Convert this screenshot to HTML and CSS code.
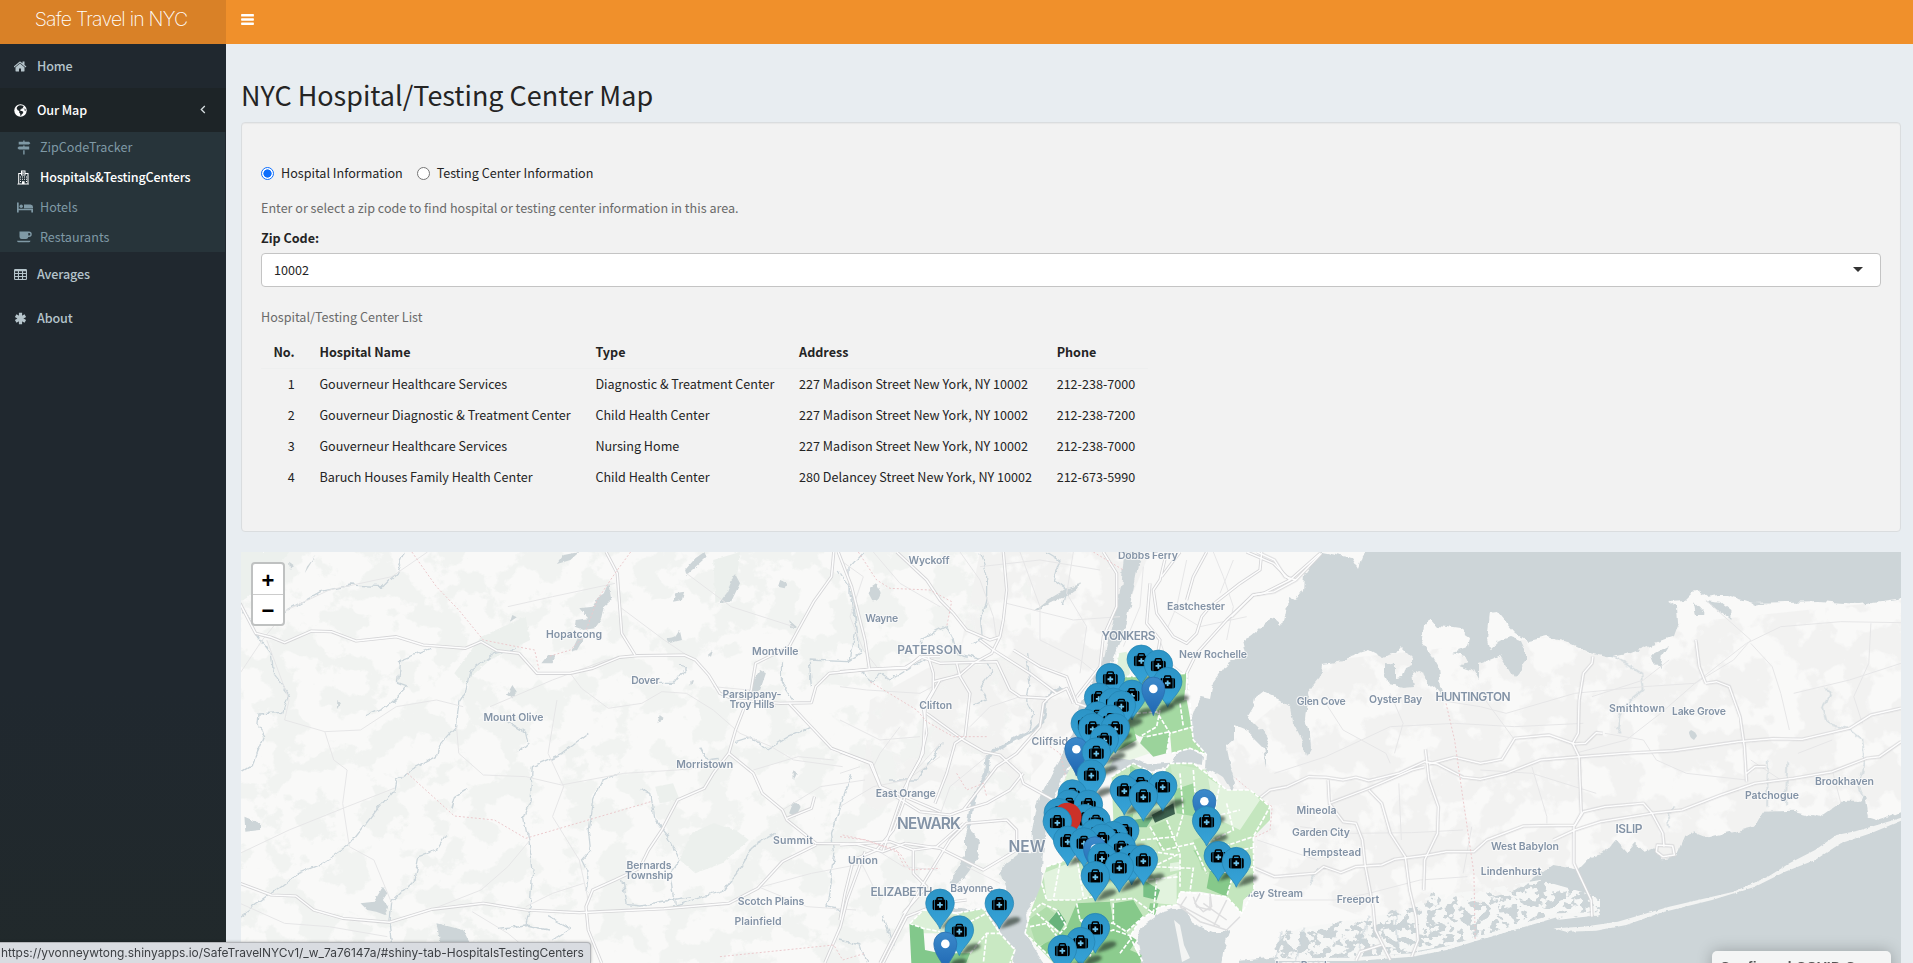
FILE: index.html
```html
<!DOCTYPE html>
<html lang="en">
<head>
<meta charset="utf-8">
<title>Safe Travel in NYC</title>
<link rel="stylesheet" href="styles.css">
</head>
<body>
<header class="header">
  <div class="logo"><span class="logo-text">Safe Travel in NYC</span></div>
  <nav class="navbar">
    <svg class="bars" viewBox="0 0 13 11"><path d="M.7 0h11.6a.6.6 0 0 1 .6.6v1.3a.6.6 0 0 1-.6.6H.7a.6.6 0 0 1-.6-.6V.6A.6.6 0 0 1 .7 0zM.7 4.2h11.6a.6.6 0 0 1 .6.6v1.3a.6.6 0 0 1-.6.6H.7a.6.6 0 0 1-.6-.6V4.800a.6.6 0 0 1 .6-.6zM.7 8.400h11.6a.6.6 0 0 1 .6.6v1.300a.6.6 0 0 1-.6.6H.7a.6.6 0 0 1-.6-.6V9a.6.6 0 0 1 .6-.6z"/></svg>
  </nav>
</header>
<div class="wrapper">
  <aside class="sidebar">
    <a class="item">
      <svg class="ico" viewBox="64 192 1664 1408"><path d="M1408 992v480q0 26-19 45t-45 19h-384v-384h-256v384h-384q-26 0-45-19t-19-45v-480q0-1 .5-3t.5-3l575-474 575 474q1 2 1 6zm223-69l-62 74q-8 9-21 11h-3q-13 0-21-7l-692-577-692 577q-12 8-24 7-13-2-21-11l-62-74q-8-10-7-23.500t11-21.500l719-599q32-26 76-26t76 26l244 204v-195q0-14 9-23t23-9h192q14 0 23 9t9 23v408l219 182q10 8 11 21.500t-7 23.500z"/></svg>
      <span>Home</span></a>
    <a class="item active">
      <svg class="ico" viewBox="0 0 13 13"><circle cx="6.5" cy="6.500" r="6.200"/><path class="cut" d="M6 1.200l2.400.3 1.400 1.200-1 .8.700 1-1.500-.3-1 1.200-1.100.3.600 1 1.300.2 1.500.8-.3 1.500-1.400 1.400-.6 1.500-.6-.4-.2-2-1.100-1.200.2-1.500-1.600-.8-1-1.600.2-1.400 1.500-1.400zM10.500 4.200l1.100 1-.1 2-.9-.8z"/></svg>
      <span>Our Map</span>
      <svg class="angle" viewBox="0 0 6 9"><path d="M4.800 1L1.300 4.500 4.800 8"/></svg></a>
    <div class="submenu">
      <a class="sub">
        <svg class="sico" viewBox="0 0 14 15"><path d="M6.200.5h1.400v1.300h4.300l1.500 1.400-1.500 1.400H1.700V1.800h4.500zM6.200 5.600h1.400v1h4.600v2.800H1.900L.4 8l1.500-1.400h4.300zM6.200 10.200h1.400v4.300H6.200z"/></svg>
        <span>ZipCodeTracker</span></a>
      <a class="sub active">
        <svg class="sico" viewBox="0 0 14 15"><path fill-rule="evenodd" d="M4 .5h4.500V3h3v10.800h.4v.7H.4v-.7h.8V3H4zM5 1.500v3.200h2.600V1.500zM2.200 4v9.500H5v-2.200h2.600v2.200h2.900V4H8.500v1.600H4V4z"/><path d="M5.300 1.700h.6v1h.8v-1h.6v2.800h-.6V3.400h-.8v1.100h-.6zM3 6.500h1v1H3zM5 6.500h1v1H5zM7 6.500h1v1H7zM9 6.500h1v1H9zM3 8.700h1v1H3zM5 8.700h1v1H5zM7 8.700h1v1H7zM9 8.700h1v1H9zM3 10.900h1v1H3zM9 10.900h1v1H9z"/></svg>
        <span>Hospitals&amp;TestingCenters</span></a>
      <a class="sub">
        <svg class="sico bed" viewBox="0 0 16 11"><path d="M0 .5h1.700v6.300H16V10.500h-1.700V8.300H1.700v2.200H0zM7 2.500h6.500q2.500.2 2.500 2.500v1.200H7z"/><circle cx="4.200" cy="4.200" r="1.700"/></svg>
        <span>Hotels</span></a>
      <a class="sub">
        <svg class="sico cup" viewBox="0 0 15 12"><path fill-rule="evenodd" d="M2.500.5H12a2.700 2.700 0 0 1 0 5.500h-.7q-.2 2-2.300 2H4.700Q2.500 8 2.500 5.800zM11.300 1.900v2.700h.7a1.300 1.300 0 0 0 0-2.700zM0 9.700h13.500q-.3 1.500-1.700 1.500H1.700Q.3 11.200 0 9.700z"/></svg>
        <span>Restaurants</span></a>
    </div>
    <a class="item">
      <svg class="ico" viewBox="0 0 13 11"><path fill-rule="evenodd" d="M1.200 0h10.600Q13 0 13 1.200v8.600Q13 11 11.800 11H1.200Q0 11 0 9.800V1.200Q0 0 1.200 0zM1.100 2.200v1.900h2.800V2.200zM5 2.200v1.900h3V2.200zM9.100 2.200v1.900h2.800V2.200zM1.100 5.100V7h2.800V5.100zM5 5.100V7h3V5.100zM9.100 5.100V7h2.800V5.100zM1.100 8v1.900h2.800V8zM5 8v1.900h3V8zM9.100 8v1.900h2.800V8z"/></svg>
      <span>Averages</span></a>
    <a class="item">
      <svg class="ico" viewBox="0 0 13 13"><path class="aster" d="M6.500 .8v11.400M1.700 3.700l9.600 5.600M11.300 3.700L1.700 9.300"/></svg>
      <span>About</span></a>
  </aside>
  <main class="content">
    <h2 class="title">NYC Hospital/Testing Center Map</h2>
    <section class="well">
      <div class="radios">
        <span class="radio on"></span><span class="rl">Hospital Information</span>
        <span class="radio"></span><span class="rl">Testing Center Information</span>
      </div>
      <p class="help">Enter or select a zip code to find hospital or testing center information in this area.</p>
      <label class="lab">Zip Code:</label>
      <div class="select"><span>10002</span><i class="caret"></i></div>
      <p class="help list">Hospital/Testing Center List</p>
      <table class="table">
        <tr><th>No.</th><th>Hospital Name</th><th>Type</th><th>Address</th><th>Phone</th></tr>
        <tr><td>1</td><td>Gouverneur Healthcare Services</td><td>Diagnostic &amp; Treatment Center</td><td>227 Madison Street New York, NY 10002</td><td>212-238-7000</td></tr>
        <tr><td>2</td><td>Gouverneur Diagnostic &amp; Treatment Center</td><td>Child Health Center</td><td>227 Madison Street New York, NY 10002</td><td>212-238-7200</td></tr>
        <tr><td>3</td><td>Gouverneur Healthcare Services</td><td>Nursing Home</td><td>227 Madison Street New York, NY 10002</td><td>212-238-7000</td></tr>
        <tr><td>4</td><td>Baruch Houses Family Health Center</td><td>Child Health Center</td><td>280 Delancey Street New York, NY 10002</td><td>212-673-5990</td></tr>
      </table>
    </section>
    <section class="map">
      <svg class="mapsvg" viewBox="241 552 1660 411">
        <defs>
          <filter id="soft" x="-50%" y="-50%" width="200%" height="200%"><feGaussianBlur stdDeviation="1.500"/></filter>
          <filter id="rough" x="0" y="0" width="100%" height="100%" color-interpolation-filters="sRGB"><feTurbulence type="fractalNoise" baseFrequency=".09" numOctaves="3" seed="4"/><feDisplacementMap in="SourceGraphic" scale="7" xChannelSelector="R" yChannelSelector="G"/></filter>
          <filter id="patches" x="0" y="0" width="100%" height="100%" color-interpolation-filters="sRGB"><feTurbulence type="fractalNoise" baseFrequency=".03 .035" numOctaves="5" seed="9"/><feColorMatrix values="0 0 0 0 .945  0 0 0 0 .953  0 0 0 0 .945  16 0 0 0 -8"/><feComposite operator="in" in2="SourceGraphic"/></filter>
          <filter id="urban" x="0" y="0" width="100%" height="100%" color-interpolation-filters="sRGB"><feTurbulence type="fractalNoise" baseFrequency=".03 .03" numOctaves="4" seed="21"/><feColorMatrix values="0 0 0 0 .95  0 0 0 0 .95  0 0 0 0 .947  14 0 0 0 -6"/><feComposite operator="in" in2="SourceGraphic"/></filter>
          <filter id="islets" x="-5%" y="-20%" width="110%" height="140%" color-interpolation-filters="sRGB"><feTurbulence type="fractalNoise" baseFrequency=".11 .13" numOctaves="3" seed="5"/><feColorMatrix values="0 0 0 0 .965  0 0 0 0 .968  0 0 0 0 .965  20 0 0 0 -9"/><feComposite operator="in" in2="SourceGraphic"/></filter>
          <linearGradient id="pin" x1="0" y1="0" x2="0" y2="1"><stop offset="0" stop-color="#3b8acb"/><stop offset="1" stop-color="#1f66b2"/></linearGradient>
          <linearGradient id="cap" x1="0" y1="0" x2="0" y2="1"><stop offset="0" stop-color="#2c94c6"/><stop offset="1" stop-color="#36a3d8"/></linearGradient>
          <g id="shadow"><path d="M0 0L8-10Q19-14 21-10T0 0z" fill="#1d2b20" opacity=".6" filter="url(#soft)"/></g>
          <g id="drop"><path d="M0 0C-3-8-14.300-16-14.300-25.600A14.300 14.300 0 0 1 14.300-25.600C14.300-16 3-8 0 0z"/></g>
          <g id="kit"><path d="M-3-29v-1.200q0-1 1-1h4q1 0 1 1V-29" fill="none" stroke="#000" stroke-width="1.500"/><path d="M-5-29.200H5v10.400H-5z"/><path d="M-5.700-29.200v10.400q-1.700 0-1.700-1.700v-7q0-1.700 1.700-1.700zM5.700-29.200v10.400q1.700 0 1.700-1.700v-7q0-1.700-1.700-1.700z"/><path d="M-.9-26.800H.9v1.900h1.900v1.800H.9v1.900H-.9v-1.900h-1.900v-1.800h1.900z" fill="#6fc3ea"/></g>
          <g id="hospital"><use href="#shadow"/><use href="#drop" fill="url(#cap)" stroke="#2482b0" stroke-width=".7"/><use href="#kit"/></g>
          <g id="selected"><use href="#drop" fill="#cb3128"/></g>
          <g id="plain"><use href="#shadow"/><path d="M0 0C-2-8-11.500-16-11.500-27A11.500 11.500 0 0 1 11.500-27C11.500-16 2-8 0 0z" fill="url(#pin)" stroke="#2a6fae" stroke-width=".8"/><circle cy="-26.700" r="4.300" fill="#fff"/></g>

          <g id="roads-west" class="ln" transform="translate(240 540) scale(.44643 .33333)">
            <path d="M0 190L35 280 70 292 100 308 160 273 205 275 260 303 350 290 410 315 505 325 540 305 575 332 625 340 665 400 740 400 790 385 850 352 890 347 995 345 1020 360 1050 405 1075 460 1110 480 1210 490 1280 488 1290 440 1320 400 1410 388 1490 382 1530 350 1568 350"/>
            <path d="M820 36L845 100 855 280 885 345M1330 36L1325 110 1285 185 1250 270 1230 320 1155 370 1145 450 1110 570 1095 640 1060 700 1040 745 980 780 945 870 915 930 895 985 840 1020 790 1050 775 1100 780 1170 810 1269"/>
            <path d="M1230 490L1265 540 1325 625 1415 670 1435 740 1568 815M1095 640L1150 700 1170 760 1215 810 1225 840 1290 910 1380 912 1440 935 1490 910 1568 925M0 1030L70 1065 125 1068 165 1110 230 1135 335 1147 430 1108 545 1090 640 1110 760 1118 950 1106 1095 1090 1160 1045 1215 965 1290 915"/>
            <path d="M1340 36L1370 140 1400 300 1410 388M1400 935L1360 1080 1345 1160 1310 1269M1225 835L1280 805 1287 770M1440 935L1490 740 1530 640 1535 500 1568 420"/>
          </g>
          <g id="roads-mid" class="ln" transform="translate(840 540) scale(.33333)">
            <path d="M170 36L260 120 300 180 340 220 380 270 450 300 480 290 490 240 500 150 490 36M0 395L95 388 200 385 240 350 300 370 470 365 510 450 540 470 620 475 680 445 700 490M480 290L455 340 400 370 360 405 280 425"/>
            <path d="M265 350L280 400 280 450 250 500 260 580 240 660 205 720 190 790 160 870 110 930 40 960 15 1060 0 1140M350 370L360 410 390 460 375 590 345 610 320 700 285 790M260 520L370 600 430 635 480 645 540 700 550 730 640 780"/>
            <path d="M0 635L90 670 120 740 240 815 330 825 370 810 470 680 530 640 600 560 610 490 640 460M370 850L290 920 220 930 150 905 0 915M300 925L430 990 530 930 530 870 500 840 380 850 330 900 250 1030 190 1130 120 1269M220 930L220 1000 260 1040 190 1120M370 810L440 790 510 750 550 700"/>
            <path d="M790 36L830 100 830 200 790 290 780 380 710 470M520 330L600 380 680 410 710 490 740 500M130 1269L200 1130 300 1090 380 1080"/>
          </g>
          <g id="roads-north" class="ln" transform="translate(980 540) scale(.33333)">
            <path d="M560 36L540 120 520 150 530 220 580 290 620 310 650 280 665 230 690 200 780 130 840 90 845 36M800 36L880 70 930 120 850 160 820 165 740 240 650 340 620 400 620 450M930 120L1020 40M680 36L640 110 620 180M510 130L500 250 540 300 530 360M600 36L545 110M0 300L40 330 150 400 230 460"/>
          </g>
          <g id="roads-east" class="ln" transform="translate(1240 540) scale(.42920 .33333)">
            <path d="M-20 230L30 165 80 155 130 120 190 40M40 36L80 60 105 110 130 120M40 780L70 750 110 740 160 710 200 712 240 720 270 712 300 722 370 700 430 665 460 672 520 712 560 718 620 700 700 660 790 650 900 640 1010 632 1160 605 1240 596 1310 598 1420 565 1470 525 1540 505"/>
            <path d="M440 672L500 652 560 670 610 658 640 595 720 585 780 612 805 610 830 578 845 580M205 720L208 790 300 745 400 690 430 680M35 985L80 1010 175 1000 195 980 235 998 270 980 330 975 360 958 440 945 480 935 545 935 575 900 660 858 780 856 800 815 850 800 940 790 960 820 985 880 988 920"/>
            <path d="M208 790L240 845 270 850 285 900 292 980 310 1100 315 1170 350 1260M300 750L330 790 350 880 385 950 395 1050 410 1130 415 1200 400 1250M432 628L440 720 462 800 460 880 430 960 428 1050M822 350L820 370 800 400 790 480 788 580 775 610 790 650 795 820 778 860 778 970 818 1080 820 1130M730 900L780 870 840 845 960 820 1030 810 1120 765 1200 730 1290 715 1380 695 1460 655 1490 650 1540 605"/>
            <path d="M1085 430L1110 425 1140 440 1165 530 1175 620 1180 725M1062 300L1070 380 1085 430M1180 700L1200 680 1225 680"/>
            <path d="M972 915L1008 918 1012 945 985 950 970 935zM270 1262L280 1235 330 1215"/>
          </g>
        </defs>

        <rect x="241" y="552" width="1660" height="411" fill="#f9f9f8"/>
        <rect x="241" y="552" width="790" height="411" filter="url(#patches)"/>
        <path d="M980 552H1150L1080 720 1010 800 930 780 860 820 870 700 960 650zM1210 760L1330 660 1901 600V860L1620 860 1400 930 1260 880z" filter="url(#urban)"/>

        <g class="park" transform="translate(240 540) scale(.44643 .33333)" filter="url(#rough)">
          <path d="M540 290L640 230 650 300 560 360 500 430 480 400zM985 960L1010 880 1060 850 1110 870 1140 900 1080 970 1020 1000zM930 740L970 730 985 780 940 790zM1060 60L1120 36 1110 150 1065 190zM0 36L110 36 60 120 0 190z"/>
        </g>

        <g class="water" filter="url(#rough)">
          <path d="M1385 530L1362 556 1358 568 1352 558 1321 552 1311 565 1304 575 1303 590 1296 600 1290 597 1285 611 1282 625 1274 618 1265 623 1258 630 1250 637 1243 640 1246 653 1238 659 1228 662 1221 672 1213 683 1210 699 1201 697 1196 707 1189 727 1193 740 1206 753 1205 768 1212 770 1223 777 1232 792 1235 783 1230 767 1226 748 1235 740 1235 726 1245 730 1253 737 1263 747 1266 768 1266 750 1270 737 1258 728 1247 717 1253 707 1255 698 1263 692 1280 700 1290 707 1293 722 1302 740 1306 757 1311 748 1310 733 1306 720 1308 700 1307 693 1320 677 1322 665 1345 662 1350 656 1369 650 1382 657 1397 653 1402 647 1412 657 1412 665 1405 668 1402 677 1395 678 1395 665 1384 663 1384 673 1390 685 1403 688 1414 687 1412 673 1418 670 1424 672 1427 682 1435 688 1445 700 1440 687 1438 667 1431 655 1421 642 1424 627 1430 619 1437 627 1459 630 1469 637 1467 648 1452 653 1464 656 1467 662 1459 665 1474 670 1479 679 1479 663 1493 658 1500 655 1508 667 1514 677 1525 663 1525 650 1521 641 1510 637 1498 641 1489 649 1487 640 1490 613 1497 612 1506 623 1515 633 1528 641 1545 637 1568 642 1590 652 1611 657 1631 653 1673 637 1678 623 1677 607 1668 601 1686 600 1696 590 1706 597 1718 595 1727 595 1753 603 1819 601 1858 604 1920 596V530z"/>
          <g transform="translate(1240 540) scale(.42920 .33333)">
            <path d="M1580 795L1515 830 1490 840 1465 830 1455 755 1445 785 1400 785 1350 830 1290 812 1220 815 1200 860 1140 880 1090 895 1060 880 1035 890 1015 950 985 955 965 925 945 935 920 905 900 935 875 900 850 940 820 950 790 990 730 975 690 1010 640 1050 600 1065 580 1050 560 1095 540 1070 515 1100 500 1065 480 1095 460 1070 440 1060 425 1115 405 1095 380 1130 350 1110 320 1150 280 1140 240 1165 235 1140 200 1165 160 1175 110 1175 80 1220 95 1250 0 1262V1310H1580z"/>
            <path d="M958 345L1000 315 985 345 980 390 965 370zM1080 180L1120 185 1145 210 1145 240 1120 215zM1060 190L1085 225 1065 225zM1195 188L1230 192 1200 200z"/>
          </g>
          <g transform="translate(840 540) scale(.33333)">
            <path d="M855 0L845 130 815 260 790 360 770 400 720 500 680 620 640 690 610 750 590 800 575 880 577 940 535 940 500 965 480 1000 500 1060 490 1100 440 1112 350 1103 300 1105 310 1118 430 1118 480 1180 525 1230 510 1310H640L580 1220 560 1180 555 1120 600 1060 605 1020 608 950 620 850 650 760 700 650 740 560 780 450 820 350 850 280 880 150 900 50V0z"/>
            <path d="M385 865L420 900 415 950 390 990 360 1030 325 1030 350 990 375 950 375 890zM90 140L105 130 122 160 110 185 92 170zM580 210L620 180 680 145 730 130 690 160 640 185 600 205z"/>
          </g>
          <g transform="translate(1120 640) scale(.33333)"><path d="M-180 395L-130 385-60 350 0 355 40 350 80 370 150 365 175 335 215 330 250 345 245 375 190 365 150 385 90 395 40 375 0 390-60 400-120 420zM65 860L130 815 190 800 220 850 290 880 330 870 310 930 300 1010H65L50 900z"/></g>
        </g>
        <g class="islets" filter="url(#islets)">
          <path d="M1285 935L1300 928 1340 922 1400 912 1430 896 1480 890 1540 880 1600 897 1600 915 1540 922 1480 940 1400 954 1330 960 1275 960z"/>
        </g>
        <g class="land" transform="translate(1240 540) scale(.42920 .33333)" filter="url(#rough)">
          <path class="barrier" d="M80 1262L260 1258 400 1245 480 1225 580 1185 680 1148 740 1125 835 1122"/>
          <path d="M730 1165L760 1175 830 1172 900 1155 980 1118 1100 1080 1200 1040 1270 995 1340 960 1400 910 1470 880 1540 842 1560 826 1440 872 1390 885 1340 930 1280 970 1230 1010 1150 1055 1000 1100 880 1145 800 1160z"/>
        </g>
        <path class="land" d="M1174 920L1180 925 1184 945 1190 958 1182 962 1178 940z"/>

        <g class="rivers ln" filter="url(#rough)">
          <g transform="translate(240 540) scale(.44643 .33333)">
            <path d="M0 190L40 290 70 340 75 400 110 460 95 520 40 525 38 555 55 590 30 670 0 695M370 36L350 100 320 140 250 135 180 155 100 215M430 322L360 360 355 430 375 440 330 500 280 530M620 325L570 340 515 390 505 460 490 490 485 560 445 620 440 650 385 690 350 720 345 750 300 820 245 915 185 970 130 1000 80 1050 0 1130"/>
            <path d="M580 520L615 560 640 580 645 610 625 635M780 580L720 640 655 680 650 780 635 830 645 900 655 1000 650 1100 640 1160M850 700L810 720 790 780 780 870 785 930 765 960 780 1000 775 1060M895 745L920 760 930 840 960 890 985 960 965 1000 975 1090M1200 880L1150 920 1120 990 1085 1050 990 1090 970 1095M855 1020L865 1090 900 1095 1010 1070M460 885L440 930 400 950 390 1020 340 1085 335 1160 345 1269M510 745L480 770 472 810M1030 620L1045 660 1070 655M1110 605L1145 590 1180 630 1230 590 1280 560M1370 700L1340 820 1325 880 1330 940 1315 1100 1350 1110M1280 440L1275 360 1360 365 1390 340 1370 150 1340 90"/>
            <path d="M690 1130L740 1165 700 1200M580 1165L640 1155 690 1170M1215 370L1215 430 1240 480M985 375L1000 380 970 430 940 430"/>
          </g>
          <g transform="translate(840 540) scale(.33333)">
            <path d="M420 40L440 100 440 180 425 240 430 290 400 310M620 36L660 60 640 120 680 150 670 200M560 340L570 430 560 480 580 520 565 570M65 395L100 425 120 400 150 420 260 350 240 300 320 260 340 300M340 300L350 340 430 360 460 390 420 440 440 480 400 500M150 720L230 720 310 610M70 36L30 80 30 160 50 260 30 360M0 1200L60 1215 80 1269M130 1130L160 1220"/>
            <path class="wide" d="M385 870L400 780 440 700 445 650 500 610 580 570 610 540 620 470 660 445"/>
          </g>
          <g transform="translate(1240 540) scale(.42920 .33333)">
            <path d="M860 345L900 370 935 400 938 450 890 500 880 560 887 580M1365 440L1375 465 1358 500 1370 550 1420 570 1450 600 1455 660 1440 740 1455 780M160 1030L185 980M1000 860L995 820 1015 800M1230 660L1228 800M1275 670L1272 800M95 1180L80 1269M150 1160L130 1269M300 1130L280 1230M360 1110L370 1220"/>
          </g>
        </g>
        <g class="water lakes" transform="translate(240 540) scale(.44643 .33333)" filter="url(#rough)">
          <path d="M825 130L832 180 815 200 808 240 795 265 770 270 750 260 752 240 780 235 760 205 790 200 800 175 815 160zM760 285L770 295 755 330 742 335zM690 345L708 345 700 370 675 370zM1040 36L1045 50 1000 105 997 90 1020 55zM760 36L740 60 710 72 725 45zM1108 100L1120 130 1100 185 1072 190 1090 160zM975 160L995 155 990 180 970 185zM1210 120L1225 130 1220 145 1205 140zM610 435L620 455 610 475 598 465zM218 480L226 490 217 508zM1165 390L1178 400 1165 450 1148 460 1145 430zM1420 135L1432 160 1418 185 1408 160zM10 830L45 850 45 870 12 875zM320 1040L330 1060 320 1080 332 1100 325 1125 305 1115 285 1110 270 1090 300 1085zM440 1150L500 1170 515 1210 450 1215zM1240 785L1256 800 1245 830 1230 820zM170 45L150 80 145 100zM985 270L990 300 960 310 955 295 975 290zM1230 240L1248 262 1235 265zM1240 690L1248 700 1240 720zM610 225L620 232 605 245zM940 525L950 535 935 550zM110 65L120 75 112 90zM1060 330L1055 350 1048 345zM1015 420L1010 438 1008 425z"/>
        </g>
        <path class="water" d="M1691 730q5 2 6 6l-3 4q-5-3-5-8z"/>

        <g class="minor ln">
          <g transform="translate(240 540) scale(.44643 .33333)">
            <path d="M0 400L50 300 105 210 200 150 340 110 420 36M60 300L110 480 100 540 190 575 210 660 240 690 230 790 245 920 300 960 340 1090M0 940L110 870 240 800 345 745M190 575L270 570 350 500 440 480 500 500M740 400L765 445 825 505 900 490 945 455 1000 460 1060 510 1120 580 1190 620 1240 660 1350 680M885 347L820 360 700 420 560 500M485 560L490 640 545 705 640 710 720 735 860 700 980 690 1060 680M710 480L690 640 725 740 700 830 760 960 780 1080M640 1100L700 1060 770 1030M430 1108L540 1050 600 980 650 900M520 1115L600 1180 680 1269M840 130L700 170 600 200M850 200L950 300 1000 345M1060 440L1140 450M1140 450L1200 500M1150 690L1250 650 1330 660M1215 810L1300 740 1400 720M1170 1040L1280 1000 1400 970M1160 1040L1270 1100 1380 1110M1000 100L1100 200 1240 260M0 1090L100 1150 200 1160 330 1190"/>
          </g>
          <g transform="translate(840 540) scale(.33333)">
            <path d="M0 60L70 110 30 230 70 330 110 380M0 440L80 450 240 460 390 380M360 36L420 120 460 230 470 300M420 80L600 60 780 90M540 36L600 200 600 300 720 360 770 400M700 36L680 160 740 260 720 400M500 190L700 240 840 230M0 540L120 600 240 590M390 560L450 500 540 470M0 800L100 740 200 720M200 720L300 650M300 825L330 740 440 650M0 700L60 680M110 930L190 980 290 990M60 960L120 1080M380 980L480 1030M100 36L180 130 300 200M180 560L120 640 100 680M300 610L220 700"/>
          </g>
          <g transform="translate(980 540) scale(.33333)"><path d="M490 80L480 200 430 320M620 60L590 200 560 270M700 36L730 110 760 200 740 300M540 300L560 360 610 400M760 60L720 160M560 200L660 260 800 230"/></g>
          <g transform="translate(1240 540) scale(.42920 .33333)">
            <path d="M80 700L200 650 350 560 500 550 640 560 800 550M200 490L240 570 340 640 350 670M350 460L380 550 360 640M460 480L560 500 620 520 780 460 940 440 1060 430 1180 310 1260 260 1400 245 1540 248M780 640L900 600 980 520 1060 430 1150 360 1190 300 1085 180M850 580L940 600 970 660 1040 700 1180 720M1190 310L1240 380 1260 460 1280 570M1470 250L1465 370 1430 470 1450 550M1290 460L1420 420 1540 370M830 760L680 700 560 690M680 680L715 830 715 850M140 860L260 880 400 878 520 870M40 900L180 960M80 1080L220 1080 300 1060 420 1020 530 1010M540 860L520 1000M370 730L376 900M560 460L640 600M1000 360L940 420 820 470M1190 660L1260 720M1300 640L1380 600M1400 790L1380 690"/>
          </g>
        </g>

        <g class="casing"><use href="#roads-west"/><use href="#roads-mid"/><use href="#roads-north"/><use href="#roads-east"/></g>
        <g class="core"><use href="#roads-west"/><use href="#roads-mid"/><use href="#roads-north"/><use href="#roads-east"/></g>

        <g class="border ln">
          <g transform="translate(240 540) scale(.44643 .33333)"><path d="M385 36L440 140 490 210 545 300 620 320 660 330 670 390M875 36L840 100 800 180 770 290 740 330 690 350M375 700L480 828 570 840 640 895 920 785M1075 1250L1330 1215 1350 1260 1400 1240M1350 885L1400 900 1470 930 1490 985"/></g>
          <g transform="translate(840 540) scale(.33333)"><path d="M55 36L110 120 150 145 270 150 335 185 320 260M90 425L230 510 260 545 340 590 440 590M350 700L380 750 430 730 440 770M600 600L660 640 680 720M760 36L850 90M0 890L80 900 180 940 210 990 300 985"/></g>
          <g transform="translate(1240 540) scale(.42920 .33333)"><path d="M480 490L500 600 520 780 545 1000 548 1200M-10 715L40 770 75 800 70 870 20 900"/></g>
        </g>

        <!-- airport -->
        <g class="ln airport" transform="translate(980 740) scale(.33333)"><path d="M600 500L660 545 740 570 780 530M640 470L650 500 690 510 690 470M670 490L740 540M590 490L720 560M740 480L700 560M620 470L600 500"/></g>

        <g class="labels"><text x="1269" y="897" textLength="68">Valley Stream</text></g>

        <g class="zips">
          <g transform="translate(980 540) scale(.33333)">
            <path fill="#dff1dc" d="M415 340L440 335 450 400 440 415 405 400z"/>
            <path fill="#9ad49a" d="M440 410L620 400 612 480 530 520 440 500 380 560 400 430z"/>
            <path fill="#a4d9a2" d="M470 500L620 480 635 560 570 580 480 590 430 560z"/>
            <path fill="#9bd39b" d="M490 590L570 575 560 640 520 650 480 610z"/>
            <path fill="#b4e0ae" d="M570 580L635 560 640 600 680 645 630 625 575 640z"/>
            <path fill="#eaf6e6" d="M400 610L470 600 510 640 450 660 390 650z"/>
            <path fill="#8fce8f" d="M280 640L340 560 460 560 470 600 400 640 330 720z"/>
            <path class="zl" d="M440 410L620 400 630 480 635 560 640 600 680 645 630 625 575 640M470 520L530 515 570 580 640 560M500 590L570 575 560 640M600 490L610 560M540 510L530 560 480 590M415 340L405 400"/>
          </g>
          <g transform="translate(980 740) scale(.33333)">
            <path fill="#dcf0d8" d="M300 20L400 60 350 160 240 250 190 260 230 170z"/>
            <path fill="#c4e6be" d="M200 380L290 350 400 240 395 110 460 70 540 110 570 70 640 70 680 100 740 150 760 165 810 150 840 170 870 200 870 240 820 290 822 450 790 480 785 520 740 470 660 455 600 455 590 495 540 500 480 540 450 590 490 680H230L135 580 150 520 185 430z"/>
            <path fill="#e2f3de" d="M190 400L290 360 330 470 280 480 200 480zM680 110L740 150 810 150 840 180 780 270 700 230zM530 420L590 400 590 495 530 490z"/>
            <path fill="#cdeac8" d="M570 70L680 90 700 200 600 220z"/>
            <path fill="#9fd69d" d="M580 150L640 130 650 230 590 220zM640 330L680 400 670 340zM450 75L500 110 450 130zM400 240L460 220 450 290 400 260z"/>
            <path fill="#3d614f" d="M515 225L580 190 585 222 525 248z"/>
            <path fill="#73b987" d="M460 240L520 230 500 262 470 262z"/>
            <path fill="#b5dfaf" d="M510 260L560 240 600 330 540 330zM640 300L670 290 700 400 665 390z"/>
            <path fill="#86c98a" d="M690 390L760 400 740 470 680 445zM400 490L460 480 490 530 440 575 400 550z"/>
            <path fill="#78c085" d="M490 420L540 450 530 480 490 470z"/>
            <path fill="#68b37c" d="M235 510L258 545 240 575 205 545z"/>
            <path fill="#8ccc8e" d="M290 490L390 485 400 550 440 580 470 600 450 630 485 645 480 680H240L180 620 260 560zM510 490L535 490 525 525 505 515z"/>
            <path fill="#b0ddab" d="M145 540L200 500 225 520 200 550 240 590 170 620z"/>
            <path fill="#fff" opacity=".5" d="M570 370L600 365 600 390 570 395z"/>
            <path class="zl" d="M200 380L290 350M185 430L200 480 290 480 340 470M395 110L460 70 540 110 570 70 640 70 680 100 740 150 810 150 870 200 820 290 822 450 785 520 740 470 600 455 590 495 540 500 480 540 450 590 490 669M135 580L150 520 185 490 230 510 260 560 240 580 170 520M135 580L230 669M290 490L300 540 400 550M400 490L400 550 440 575 490 530M600 100L610 220 590 290 480 300M640 90L650 230 700 330 820 290M720 130L700 230 780 210M740 190L760 270 700 300M510 260L550 330 640 310 680 400M560 240L600 340 600 440M480 330L590 345 520 380 640 385 630 455M490 420L600 410M690 390L760 400 820 380M760 400L740 470M740 340L830 320M390 480L460 475 520 520 530 420M340 590L400 570 460 590M300 540L350 590 330 650M240 370L220 480M290 350L310 470M150 560L200 550 240 600M420 640L450 600"/>
          </g>
          <g transform="translate(840 540) scale(.33333)">
            <path fill="#dcf0d8" d="M210 1150L250 1110 350 1120 400 1150 330 1180 250 1180z"/>
            <path fill="#c9e9c3" d="M350 1120L430 1105 480 1180 525 1230 510 1290H350z"/>
            <path fill="#82c88b" d="M208 1150L250 1165 255 1230 300 1240 390 1240 370 1290H215z"/>
            <path class="zl" d="M210 1150L250 1110 350 1120 430 1105 480 1180 525 1230 510 1269M208 1150L250 1165 300 1175M350 1120L380 1150 440 1120M390 1240L440 1180 480 1180M440 1180L430 1269"/>
          </g>
        </g>
        <g class="roadthru ln" transform="translate(980 740) scale(.33333)"><path d="M660 460L645 490 670 515 695 500 690 460"/></g>

        <g class="labels">
          <text x="929" y="563.500" textLength="41">Wyckoff</text>
          <text x="1148" y="558.500" textLength="60">Dobbs Ferry</text>
          <text x="1196" y="610" textLength="58">Eastchester</text>
          <text x="1128.500" y="639.500" textLength="54" class="m">YONKERS</text>
          <text x="1213" y="657.500" textLength="68">New Rochelle</text>
          <text x="574" y="637.500" textLength="56">Hopatcong</text>
          <text x="881.700" y="622" textLength="33">Wayne</text>
          <text x="775.300" y="654.500" textLength="46.500">Montville</text>
          <text x="929.700" y="653.500" textLength="65" class="m">PATERSON</text>
          <text x="645.400" y="684" textLength="28.500">Dover</text>
          <text x="752" y="698" textLength="59">Parsippany-</text>
          <text x="752" y="708" textLength="45">Troy Hills</text>
          <text x="513.500" y="721" textLength="60">Mount Olive</text>
          <text x="935.700" y="709" textLength="33">Clifton</text>
          <text x="1053" y="744.500" textLength="43">Cliffside</text>
          <text x="704.700" y="768" textLength="57">Morristown</text>
          <text x="905.800" y="796.500" textLength="60">East Orange</text>
          <text x="929" y="828.500" textLength="64" class="l">NEWARK</text>
          <text x="793" y="844" textLength="40">Summit</text>
          <text x="863" y="863.500" textLength="30">Union</text>
          <text x="901.500" y="896" textLength="62" class="m">ELIZABETH</text>
          <text x="971.800" y="891.500" textLength="43">Bayonne</text>
          <text x="649" y="868.500" textLength="45">Bernards</text>
          <text x="649" y="879" textLength="48">Township</text>
          <text x="771" y="904.500" textLength="66.500">Scotch Plains</text>
          <text x="758" y="925" textLength="47">Plainfield</text>
          <text x="1027" y="851.500" textLength="37" class="l">NEW</text>
          <text x="1321.300" y="705" textLength="49">Glen Cove</text>
          <text x="1395.600" y="702.500" textLength="53">Oyster Bay</text>
          <text x="1473" y="700.500" textLength="75" class="m">HUNTINGTON</text>
          <text x="1637" y="711.500" textLength="56">Smithtown</text>
          <text x="1699" y="714.500" textLength="54">Lake Grove</text>
          <text x="1844.500" y="785" textLength="59">Brookhaven</text>
          <text x="1772" y="798.500" textLength="54">Patchogue</text>
          <text x="1316.600" y="814" textLength="40">Mineola</text>
          <text x="1321" y="836" textLength="58">Garden City</text>
          <text x="1332" y="855.500" textLength="58">Hempstead</text>
          <text x="1358" y="902.500" textLength="42.500">Freeport</text>
          <text x="1629" y="833" textLength="27" class="m">ISLIP</text>
          <text x="1525" y="849.500" textLength="68">West Babylon</text>
          <text x="1511" y="874.500" textLength="60.500">Lindenhurst</text>
          <text x="1303" y="969" textLength="55">Long Beach</text>
        </g>
        <g id="markers"></g>
      </svg>
      <div class="zoom"><span>+</span><span>−</span></div>
      <div class="legend">Confirmed COVID Cases</div>
    </section>
  </main>
</div>
<div class="status">https://yvonneywtong.shinyapps.io/SafeTravelNYCv1/_w_7a76147a/#shiny-tab-HospitalsTestingCenters</div>
<script src="markers.js"></script>
</body>
</html>
```
FILE: styles.css
```css
* { box-sizing: border-box; }
body { margin: 0; height: 963px; overflow: hidden; position: relative; background: #e8edf1; color: #242424; font-family: "Noto Sans CJK SC", "Noto Sans", sans-serif; font-size: 12.59px; line-height: 20px; }
.header { display: flex; height: 44px; }
.logo { width: 226px; background: #d98127; color: #fff; display: flex; justify-content: center; padding: 7px 4px 0 0; }
.logo-text { font: 200 19.500px/24px Inter, sans-serif; letter-spacing: -.8px; white-space: nowrap; }
.navbar { flex: 1; background: #f0902b; padding: 14px 0 0 15px; }
.bars { width: 13px; height: 11px; fill: #fff; display: block; }
.wrapper { display: flex; height: 919px; }
.sidebar { width: 226px; flex: none; background: linear-gradient(#20282f, #20282f 70%, #21292b); color: #b5c4cb; }
.item { display: flex; align-items: center; height: 44px; padding-left: 14px; font-weight: 500; letter-spacing: -.12px; }
.item.active { background: #1d2427; color: #fff; }
.item span { margin-left: 10px; }
.ico { width: 13px; height: 13px; fill: currentColor; }
.cut { fill: #1d2427; }
.aster { fill: none; stroke: currentColor; stroke-width: 3.2; }
.angle { width: 6px; height: 9px; margin: -2px 20px 0 auto; fill: none; stroke: #d7dfe2; stroke-width: 1.3; }
.submenu { background: #27343a; margin-right: 1px; height: 120px; }
.sub { display: flex; align-items: center; height: 30px; padding: 0 0 0 17px; color: #7f99a5; }
.sub.active { color: #fff; font-weight: 500; letter-spacing: -.17px; }
.sub span { margin-left: 9px; }
.sico { width: 14px; height: 15px; fill: currentColor; }
.bed { width: 16px; height: 11px; margin-right: -2px; }
.cup { width: 15px; height: 12px; margin-right: -1px; }
.content { flex: 1; padding: 34px 12px 0 15px; min-width: 0; }
.title { margin: 0; height: 44px; font-size: 26.960px; font-weight: 400; line-height: 34px; white-space: nowrap; }
.well { height: 410px; background: #f2f2f2; border: 1px solid #dadddf; border-radius: 4px; padding: 40px 19px 0; box-shadow: inset 0 1px 1px rgba(0,0,0,.04); }
.radios { display: flex; align-items: center; height: 20px; }
.radio { width: 13px; height: 13px; border: 1px solid #767676; border-radius: 50%; background: #fff; margin-right: 7px; }
.radio.on { border: 1px solid #0d6efd; background: radial-gradient(#0d6efd 0 3.800px, #fff 4.400px); }
.rl { margin-right: 14px; }
.help { margin: 15px 0 0; color: #6a6a6a; line-height: 20px; }
.lab { display: block; margin: 10px 0 5px; font-weight: 700; line-height: 20px; }
.select { height: 34px; border: 1px solid #c4c4c4; border-radius: 4px; background: #fff; display: flex; justify-content: space-between; align-items: center; padding: 0 17px 0 12px; }
.caret { border: 5px solid transparent; border-top-color: #333; border-bottom: 0; margin-top: -2px; }
.list { margin: 20px 0 9px; }
.table { border-collapse: collapse; white-space: nowrap; }
.table th, .table td { padding: 0 12.400px; height: 31px; text-align: left; }
.table th { height: 32px; border-bottom: 1px solid #eeefef; }
.table th:first-child, .table td:first-child { text-align: right; }
.map { position: relative; height: 411px; margin-top: 20px; overflow: hidden; }
.mapsvg { display: block; width: 1660px; height: 411px; }
.ln path { fill: none; vector-effect: non-scaling-stroke; stroke-linejoin: round; }
.water { fill: #cdd5d8; }
.park { fill: #ecf0ed; }
.land { fill: #f3f4f3; }
.land .barrier { fill: none; stroke: #f5f6f5; stroke-width: 11; }
.rivers { stroke: #cbd5da; stroke-width: 1.3; }
.rivers .wide { stroke-width: 3.5; }
.minor { stroke: #e6e6e7; stroke-width: 1; }
.casing { stroke: #d5d5d7; stroke-width: 3.200; }
.core { stroke: #fdfdfd; stroke-width: 1.500; }
.border { stroke: #ebc9cc; stroke-width: 1; stroke-dasharray: 2 2; }
.airport, .roadthru { stroke: #dededf; stroke-width: 1.500; }
.zl { fill: none; stroke: #fff; stroke-width: 5; stroke-dasharray: 13 5; }
.labels text { font: 600 10.500px Inter, sans-serif; fill: #8393a6; text-anchor: middle; paint-order: stroke; stroke: #fafafa; stroke-width: 2px; stroke-opacity: .8; }
.labels .m { font-size: 12px; }
.labels .l { font-size: 15.500px; }
.zoom { position: absolute; left: 10px; top: 10px; width: 34px; height: 64px; border: 2px solid #bfc1c1; border-radius: 4px; background: #fff; display: flex; flex-direction: column; }
.zoom span { height: 29px; text-align: center; font: bold 22px/31px "Liberation Sans", sans-serif; color: #000; }
.zoom span:first-child { height: 31px; line-height: 34px; border-bottom: 1px solid #ccc; }
.legend { position: absolute; left: 1471px; top: 399px; width: 179px; height: 80px; padding: 6px 8px; background: #f4f5f5; border-radius: 5px; box-shadow: 0 0 15px rgba(0,0,0,.25); font: bold 14px/20px "Liberation Sans", sans-serif; letter-spacing: .2px; color: #555; white-space: nowrap; }
.status { position: absolute; left: 0; top: 942px; width: 591px; height: 21px; background: #d9dce1; border: 1px solid #b3b5b9; border-width: 1px 1px 0 0; border-radius: 0 4px 0 0; box-shadow: 0 0 3px rgba(0,0,0,.3); font: 11.960px/20px Inter, sans-serif; color: #3c3f43; padding-left: 1px; white-space: nowrap; }
```
FILE: markers.js
```js
// Marker heads, grouped by area; each area has an origin and a 3:1 grid.
const areas = [
  { x: 980, y: 540, pts: [
    ["hospital", 484, 358], ["hospital", 535, 373], ["hospital", 391, 413], ["hospital", 563, 425],
    ["hospital", 456, 463], ["hospital", 356, 472], ["hospital", 400, 487], ["hospital", 424, 495],
    ["plain", 520, 450], ["hospital", 352, 528], ["hospital", 392, 538], ["hospital", 316, 550],
    ["hospital", 338, 563], ["hospital", 406, 563], ["hospital", 373, 597], ["plain", 289, 631], ["hospital", 349, 636]
  ] },
  { x: 980, y: 740, pts: [
    ["hospital", 334, 102], ["hospital", 482, 130], ["hospital", 548, 137], ["hospital", 433, 149],
    ["hospital", 277, 162], ["hospital", 490, 167], ["plain", 673, 187], ["hospital", 268, 192],
    ["hospital", 325, 193], ["hospital", 235, 218], ["hospital", 315, 236], ["selected", 262, 231],
    ["hospital", 348, 243], ["hospital", 680, 242], ["hospital", 232, 244], ["hospital", 434, 271],
    ["hospital", 345, 280], ["hospital", 400, 287], ["hospital", 366, 295], ["hospital", 263, 301],
    ["hospital", 312, 306], ["hospital", 424, 321], ["plain", 345, 329], ["hospital", 715, 347],
    ["hospital", 366, 352], ["hospital", 455, 358], ["hospital", 490, 359], ["hospital", 769, 365],
    ["hospital", 418, 380], ["hospital", 346, 407], ["hospital", 58, 490], ["hospital", -120, 490],
    ["hospital", 346, 563], ["hospital", -62, 570], ["hospital", 302, 605], ["plain", -104, 615], ["hospital", 247, 628]
  ] }
];
const layer = document.getElementById("markers");
for (const area of areas) {
  for (const [kind, px, py] of area.pts) {
    const use = document.createElementNS("http://www.w3.org/2000/svg", "use");
    use.setAttribute("href", "#" + kind);
    use.setAttribute("x", area.x + px / 3);
    use.setAttribute("y", area.y + py / 3 + 25.6);
    layer.append(use);
  }
}
```
